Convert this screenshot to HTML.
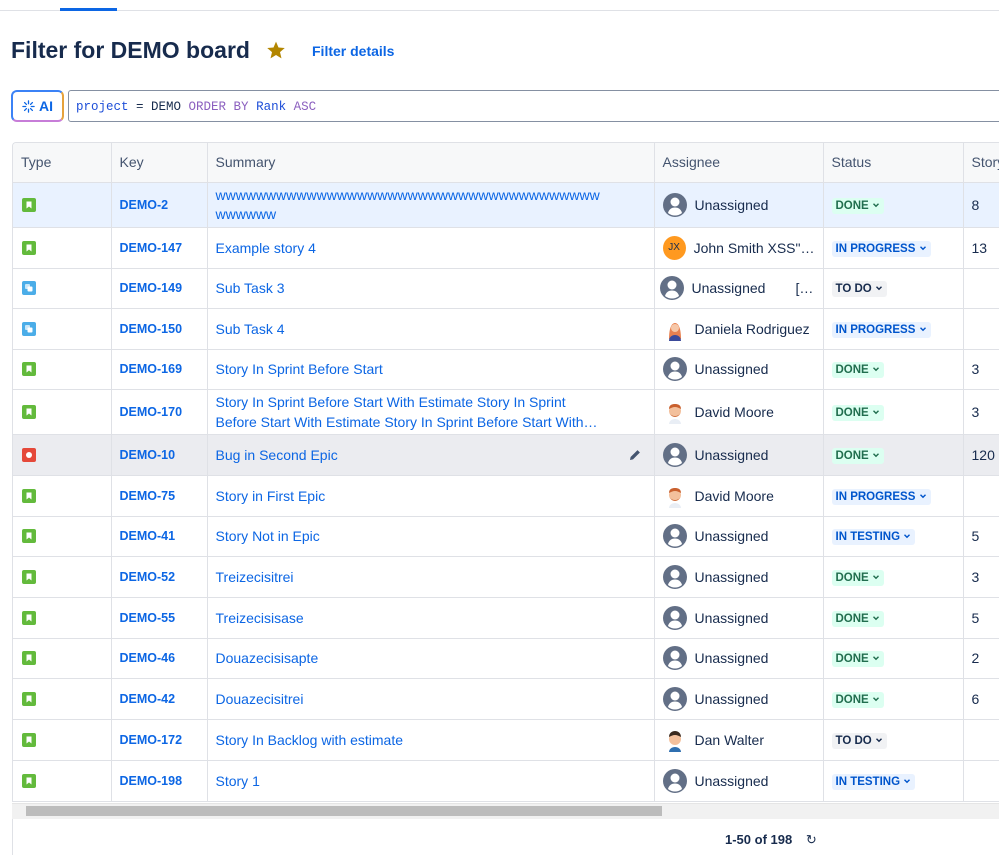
<!DOCTYPE html>
<html><head><meta charset="utf-8">
<style>
*{box-sizing:border-box;margin:0;padding:0}
body{width:999px;height:855px;overflow:hidden;background:#fff;font-family:"Liberation Sans",sans-serif;color:#172b4d;position:relative}
.topline{position:absolute;left:0;top:10px;width:999px;height:1px;background:#dfe1e6}
.tab{position:absolute;left:60px;top:8px;width:57px;height:3px;background:#0c66e4}
h1{position:absolute;left:11px;top:37px;font-size:23px;font-weight:700;color:#172b4d}
.star{position:absolute;left:266px;top:40px}
.fd{position:absolute;left:312px;top:43px;font-size:14px;color:#0c66e4;font-weight:700}
.ai{position:absolute;left:11px;top:90px;width:53px;height:32px;border-radius:6px;border:2px solid #3b82f6;border-right-color:#e6a23c;border-bottom-color:#c77dd8;font-size:14px;font-weight:700;color:#0c66e4;display:flex;align-items:center;justify-content:center;gap:4px}
.q{position:absolute;left:68px;top:90px;width:940px;height:32px;border:1px solid #8590a2;border-radius:3px;font-family:"Liberation Mono",monospace;font-size:12.5px;padding:9px 7px;color:#172b4d}
.kw{color:#8b5fbf}.fl{color:#1d4ed8}
.wrap{position:absolute;left:12px;top:142px;width:1000px;height:660px;overflow:hidden;border-left:1px solid #dfe1e6;border-top:1px solid #dfe1e6;border-radius:4px 0 0 0}
table{border-collapse:collapse;table-layout:fixed;width:1000px}
td,th{border-right:1px solid #dfe1e6;border-bottom:1px solid #dfe1e6;font-size:14px;padding:0 8px;vertical-align:middle;white-space:nowrap;overflow:hidden}
th{height:39px;background:#f7f8f9;text-align:left;font-weight:400;color:#44546f}
td.k{font-weight:700;color:#0c66e4;font-size:12.5px}
td.s{color:#0c66e4;white-space:normal;line-height:20px}
tr.sel td{background:#e9f2ff}
tr.hov td{background:#ebecf0}
.as{display:flex;align-items:center;gap:8px;color:#172b4d}
.lz{display:inline-block;font-size:11.5px;font-weight:700;padding:2px 4px;border-radius:3px}
.done{background:#dcfff1;color:#216e4e}
.prog{background:#e9f2ff;color:#0055cc}
.todo{background:#f1f2f4;color:#172b4d}
.ti{display:block;width:14px;height:14px;margin-left:1px}
.sb{position:absolute;left:12px;top:803px;width:990px;height:16px;background:#f1f1f1;border-top:1px solid #e5e5e5}
.th{position:absolute;left:26px;top:806px;width:636px;height:10px;background:#bcbcbc}
.ft{position:absolute;left:12px;top:819px;width:990px;height:36px;border-left:1px solid #dfe1e6}
.pg{position:absolute;left:725px;top:832px;font-size:13px;font-weight:700;color:#172b4d}
</style></head><body>
<div class="topline"></div><div class="tab"></div>
<h1>Filter for DEMO board</h1>
<svg class="star" width="20" height="20" viewBox="0 0 24 24"><path d="M12 2l3 7 7.5.6-5.7 5 1.8 7.4L12 18l-6.6 4 1.8-7.4-5.7-5L9 9z" fill="#b38600"/></svg>
<div class="fd">Filter details</div>
<div class="ai"><svg width="13" height="13" viewBox="0 0 14 14" stroke="#0c66e4" stroke-width="1.4" stroke-linecap="round"><path d="M7 1v3M7 10v3M1 7h3M10 7h3M2.8 2.8l2 2M9.2 9.2l2 2M2.8 11.2l2-2M9.2 4.8l2-2"/></svg>AI</div>
<div class="q"><span class="fl">project</span> = DEMO <span class="kw">ORDER BY</span> <span class="fl">Rank</span> <span class="kw">ASC</span></div>
<svg width="0" height="0" style="position:absolute"><defs>
<symbol id="u" viewBox="0 0 24 24"><circle cx="12" cy="12" r="12" fill="#626f86"/><circle cx="12" cy="9" r="4.5" fill="#fff"/><path d="M5 20c1-4 4-5.5 7-5.5s6 1.5 7 5.5a11 11 0 0 1-14 0z" fill="#fff"/></symbol>
<symbol id="st" viewBox="0 0 14 14"><rect width="14" height="14" rx="2" fill="#63ba3c"/><path d="M4.5 3.5h5v7L7 8.5 4.5 10.5z" fill="#fff"/></symbol>
<symbol id="sub" viewBox="0 0 14 14"><rect width="14" height="14" rx="2" fill="#4bade8"/><rect x="3" y="3" width="5" height="5" rx="1" fill="#fff" opacity=".7"/><rect x="5.5" y="5.5" width="5" height="5" rx="1" fill="#fff"/></symbol>
<symbol id="bug" viewBox="0 0 14 14"><rect width="14" height="14" rx="2" fill="#e5493a"/><circle cx="7" cy="7" r="3" fill="#fff"/></symbol>
<symbol id="f" viewBox="0 0 24 24"><path d="M6 22c0-6 1-16 6-16s6 10 6 16z" fill="#e8804f"/><circle cx="12" cy="11" r="4" fill="#f6c7a8"/><path d="M6 24c0-4 3-6 6-6s6 2 6 6z" fill="#3b4a9a"/></symbol>
<symbol id="m" viewBox="0 0 24 24"><circle cx="12" cy="11" r="6" fill="#f3c09c"/><path d="M6 9c0-4 3-5 6-5s6 1 6 5c-2-1-4-2-6-2S8 8 6 9z" fill="#c9602e"/><path d="M7 13c1 5 9 5 10 0-1 4-9 4-10 0z" fill="#c9602e"/><path d="M6 24c0-3 3-5 6-5s6 2 6 5z" fill="#e9eef5"/></symbol>
<symbol id="d" viewBox="0 0 24 24"><circle cx="12" cy="11" r="6" fill="#f3c09c"/><path d="M6 9c0-4 3-6 6-6s6 2 6 6c-2-1-4-2-6-2S8 8 6 9z" fill="#3a2a1f"/><path d="M6 24c0-3 3-5 6-5s6 2 6 5z" fill="#2f6fb0"/></symbol>
<symbol id="cv" viewBox="0 0 8 8"><path d="M1.5 2.8L4 5.3 6.5 2.8" stroke="currentColor" stroke-width="1.4" fill="none"/></symbol>
</defs></svg>
<div class="wrap"><table>
<colgroup><col style="width:98px"><col style="width:96px"><col style="width:447px"><col style="width:169px"><col style="width:140px"><col style="width:50px"></colgroup>
<tr><th>Type</th><th>Key</th><th>Summary</th><th>Assignee</th><th>Status</th><th>Story</th></tr>
<tr class="sel" style="height:45px"><td><svg class="ti"><use href="#st"/></svg></td><td class="k">DEMO-2</td><td class="s" style="line-height:19px">wwwwwwwwwwwwwwwwwwwwwwwwwwwwwwwwwwwwww<br>wwwwww</td><td><div class="as"><svg width="24" height="24"><use href="#u"/></svg>Unassigned</div></td><td><span class="lz done">DONE <svg width="8" height="8"><use href="#cv"/></svg></span></td><td>8</td></tr>
<tr style="height:41px"><td><svg class="ti"><use href="#st"/></svg></td><td class="k">DEMO-147</td><td class="s">Example story 4</td><td><div class="as"><span style="width:24px;height:24px;border-radius:50%;background:#ff991f;font-size:10px;display:flex;align-items:center;justify-content:center;color:#172b4d">JX</span>John Smith XSS"…</div></td><td><span class="lz prog">IN PROGRESS <svg width="8" height="8"><use href="#cv"/></svg></span></td><td>13</td></tr>
<tr style="height:40px"><td><svg class="ti"><use href="#sub"/></svg></td><td class="k">DEMO-149</td><td class="s">Sub Task 3</td><td style="padding-left:5px"><div class="as"><svg width="24" height="24"><use href="#u"/></svg>Unassigned<span style="margin-left:22px">[…</span></div></td><td><span class="lz todo">TO DO <svg width="8" height="8"><use href="#cv"/></svg></span></td><td></td></tr>
<tr style="height:41px"><td><svg class="ti"><use href="#sub"/></svg></td><td class="k">DEMO-150</td><td class="s">Sub Task 4</td><td><div class="as"><svg width="24" height="24"><use href="#f"/></svg>Daniela Rodriguez</div></td><td><span class="lz prog">IN PROGRESS <svg width="8" height="8"><use href="#cv"/></svg></span></td><td></td></tr>
<tr style="height:40px"><td><svg class="ti"><use href="#st"/></svg></td><td class="k">DEMO-169</td><td class="s">Story In Sprint Before Start</td><td><div class="as"><svg width="24" height="24"><use href="#u"/></svg>Unassigned</div></td><td><span class="lz done">DONE <svg width="8" height="8"><use href="#cv"/></svg></span></td><td>3</td></tr>
<tr style="height:45px"><td><svg class="ti"><use href="#st"/></svg></td><td class="k">DEMO-170</td><td class="s">Story In Sprint Before Start With Estimate Story In Sprint<br>Before Start With Estimate Story In Sprint Before Start With…</td><td><div class="as"><svg width="24" height="24"><use href="#m"/></svg>David Moore</div></td><td><span class="lz done">DONE <svg width="8" height="8"><use href="#cv"/></svg></span></td><td>3</td></tr>
<tr class="hov" style="height:41px"><td><svg class="ti"><use href="#bug"/></svg></td><td class="k">DEMO-10</td><td class="s" style="position:relative">Bug in Second Epic<svg style="position:absolute;right:12px;top:13px" width="14" height="14" viewBox="0 0 14 14"><path d="M2 12l.6-3L9.5 2.1l2.4 2.4L5 11.4z" fill="#44546f"/></svg></td><td><div class="as"><svg width="24" height="24"><use href="#u"/></svg>Unassigned</div></td><td><span class="lz done">DONE <svg width="8" height="8"><use href="#cv"/></svg></span></td><td>120</td></tr>
<tr style="height:41px"><td><svg class="ti"><use href="#st"/></svg></td><td class="k">DEMO-75</td><td class="s">Story in First Epic</td><td><div class="as"><svg width="24" height="24"><use href="#m"/></svg>David Moore</div></td><td><span class="lz prog">IN PROGRESS <svg width="8" height="8"><use href="#cv"/></svg></span></td><td></td></tr>
<tr style="height:40px"><td><svg class="ti"><use href="#st"/></svg></td><td class="k">DEMO-41</td><td class="s">Story Not in Epic</td><td><div class="as"><svg width="24" height="24"><use href="#u"/></svg>Unassigned</div></td><td><span class="lz prog">IN TESTING <svg width="8" height="8"><use href="#cv"/></svg></span></td><td>5</td></tr>
<tr style="height:41px"><td><svg class="ti"><use href="#st"/></svg></td><td class="k">DEMO-52</td><td class="s">Treizecisitrei</td><td><div class="as"><svg width="24" height="24"><use href="#u"/></svg>Unassigned</div></td><td><span class="lz done">DONE <svg width="8" height="8"><use href="#cv"/></svg></span></td><td>3</td></tr>
<tr style="height:41px"><td><svg class="ti"><use href="#st"/></svg></td><td class="k">DEMO-55</td><td class="s">Treizecisisase</td><td><div class="as"><svg width="24" height="24"><use href="#u"/></svg>Unassigned</div></td><td><span class="lz done">DONE <svg width="8" height="8"><use href="#cv"/></svg></span></td><td>5</td></tr>
<tr style="height:40px"><td><svg class="ti"><use href="#st"/></svg></td><td class="k">DEMO-46</td><td class="s">Douazecisisapte</td><td><div class="as"><svg width="24" height="24"><use href="#u"/></svg>Unassigned</div></td><td><span class="lz done">DONE <svg width="8" height="8"><use href="#cv"/></svg></span></td><td>2</td></tr>
<tr style="height:41px"><td><svg class="ti"><use href="#st"/></svg></td><td class="k">DEMO-42</td><td class="s">Douazecisitrei</td><td><div class="as"><svg width="24" height="24"><use href="#u"/></svg>Unassigned</div></td><td><span class="lz done">DONE <svg width="8" height="8"><use href="#cv"/></svg></span></td><td>6</td></tr>
<tr style="height:41px"><td><svg class="ti"><use href="#st"/></svg></td><td class="k">DEMO-172</td><td class="s">Story In Backlog with estimate</td><td><div class="as"><svg width="24" height="24"><use href="#d"/></svg>Dan Walter</div></td><td><span class="lz todo">TO DO <svg width="8" height="8"><use href="#cv"/></svg></span></td><td></td></tr>
<tr style="height:41px"><td><svg class="ti"><use href="#st"/></svg></td><td class="k">DEMO-198</td><td class="s">Story 1</td><td><div class="as"><svg width="24" height="24"><use href="#u"/></svg>Unassigned</div></td><td><span class="lz prog">IN TESTING <svg width="8" height="8"><use href="#cv"/></svg></span></td><td></td></tr>
<tr style="height:20px"><td></td><td></td><td></td><td></td><td></td><td></td></tr>
</table></div>
<div class="sb"></div><div class="th"></div>
<div class="ft"></div>
<div class="pg">1-50 of 198 <span style="margin-left:10px;font-weight:400">↻</span></div>
</body></html>
